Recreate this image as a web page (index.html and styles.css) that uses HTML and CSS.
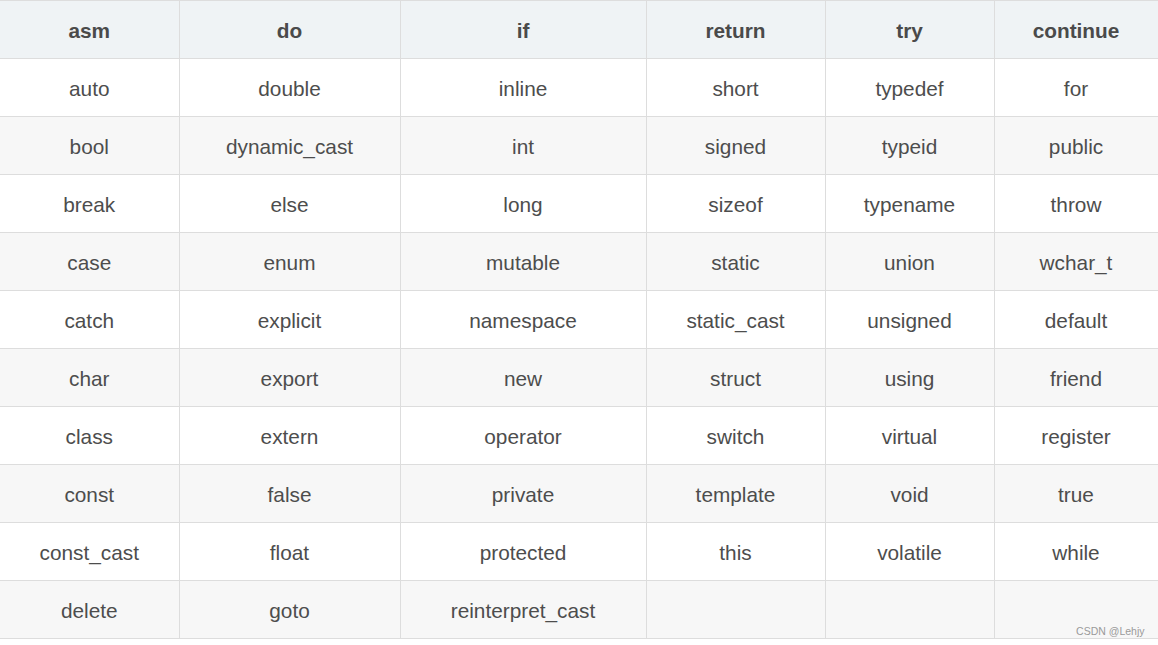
FILE: index.html
```html
<!DOCTYPE html>
<html>
<head>
<meta charset="utf-8">
<link rel="stylesheet" href="styles.css">
</head>
<body>
<div class="wrap">
<table class="kw">
<colgroup>
<col class="c1"><col class="c2"><col class="c3"><col class="c4"><col class="c5"><col class="c6">
</colgroup>
<thead>
<tr><th>asm</th><th>do</th><th>if</th><th>return</th><th>try</th><th>continue</th></tr>
</thead>
<tbody>
<tr><td>auto</td><td>double</td><td>inline</td><td>short</td><td>typedef</td><td>for</td></tr>
<tr><td>bool</td><td>dynamic_cast</td><td>int</td><td>signed</td><td>typeid</td><td>public</td></tr>
<tr><td>break</td><td>else</td><td>long</td><td>sizeof</td><td>typename</td><td>throw</td></tr>
<tr><td>case</td><td>enum</td><td>mutable</td><td>static</td><td>union</td><td>wchar_t</td></tr>
<tr><td>catch</td><td>explicit</td><td>namespace</td><td>static_cast</td><td>unsigned</td><td>default</td></tr>
<tr><td>char</td><td>export</td><td>new</td><td>struct</td><td>using</td><td>friend</td></tr>
<tr><td>class</td><td>extern</td><td>operator</td><td>switch</td><td>virtual</td><td>register</td></tr>
<tr><td>const</td><td>false</td><td>private</td><td>template</td><td>void</td><td>true</td></tr>
<tr><td>const_cast</td><td>float</td><td>protected</td><td>this</td><td>volatile</td><td>while</td></tr>
<tr><td>delete</td><td>goto</td><td>reinterpret_cast</td><td></td><td></td><td class="wm-cell"><span class="wm">CSDN @Lehjy</span></td></tr>
</tbody>
</table>
</div>
</body>
</html>
```

FILE: styles.css
```css
html, body {
  margin: 0;
  padding: 0;
  background: #ffffff;
}
.wrap {
  width: 1158px;
}
.kw {
  border-collapse: collapse;
  table-layout: fixed;
  width: 1158px;
  font-family: "Liberation Sans", Arial, sans-serif;
  font-size: 20.8px;
  color: #4d4d4d;
}
.c1 { width: 179px; }
.c2 { width: 221px; }
.c3 { width: 246px; }
.c4 { width: 179px; }
.c5 { width: 169px; }
.c6 { width: 164px; }
.kw th, .kw td {
  border: 1px solid #dddddd;
  height: 58px;
  padding: 0 0 0 0;
  text-align: center;
  vertical-align: middle;
  box-sizing: border-box;
}
.kw th:first-child, .kw td:first-child {
  border-left: none;
}
.kw th {
  background: #eff3f5;
  font-weight: bold;
  color: #4a4a4a;
  padding-top: 2px;
}
.kw td {
  padding-top: 2px;
}
.kw tbody tr:nth-child(even) td {
  background: #f7f7f7;
}
.kw tbody tr:nth-child(odd) td {
  background: #ffffff;
}
.wm-cell {
  position: relative;
}
.wm {
  position: absolute;
  right: 13px;
  bottom: 1px;
  font-size: 10.5px;
  color: #9a9a9a;
}
```
